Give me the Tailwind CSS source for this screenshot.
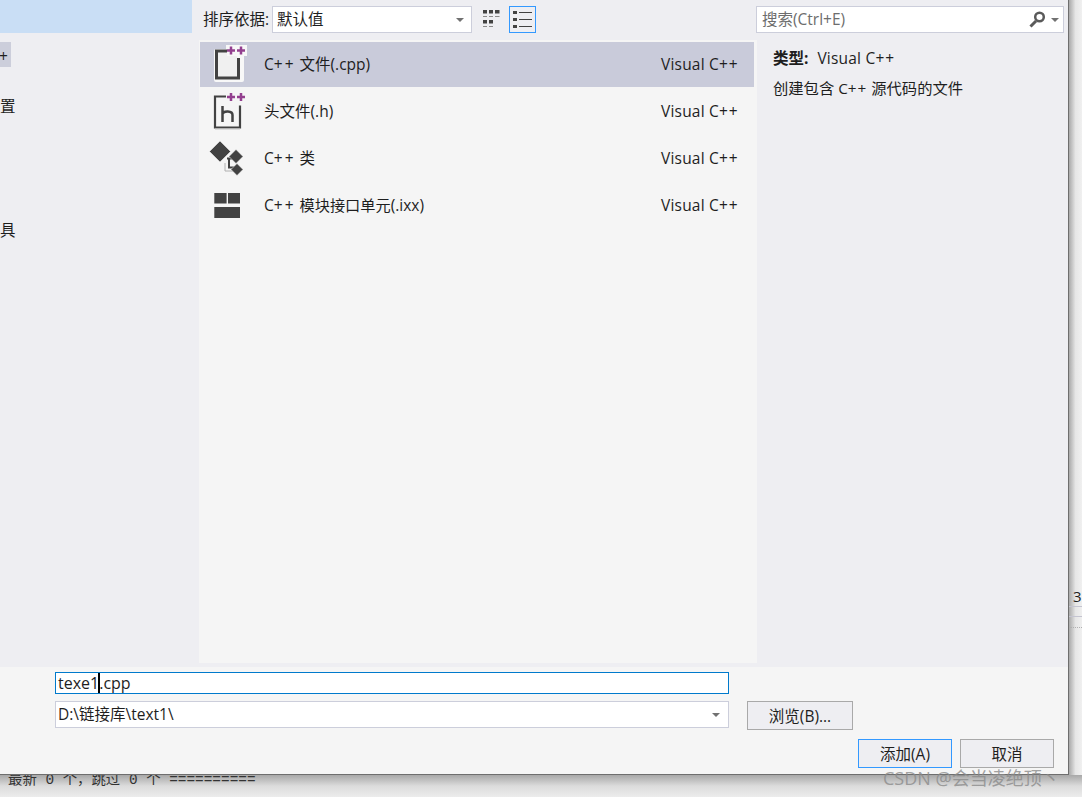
<!DOCTYPE html>
<html lang="zh">
<head>
<meta charset="utf-8">
<title>添加新项</title>
<script src="https://cdn.jsdelivr.net/npm/@tailwindcss/browser@4"></script>
</head>
<body class="w-[1082px] h-[797px] overflow-hidden relative bg-[#e4e4e4] text-[15.5px] text-[#1e1e1e] font-['Open_Sans','Noto_Sans_CJK_SC',sans-serif]">

<!-- 背后的窗口 -->
<div class="absolute left-[1069px] top-0 w-[13px] h-[797px] bg-gradient-to-r from-[#a9a9a9] via-[#e6e6e6] to-[#f0f0f0]">
  <div class="mt-[586px] pl-[4px] h-[21px] leading-[21px] text-[15px] border-b border-[#c4c4d0]">3</div>
  <div class="h-[10px] border-b border-[#c4c4d0]"></div>
  <div class="mt-[10px] ml-[1px] h-[1px] border-t border-dotted border-[#b0b0b0]"></div>
</div>
<div class="absolute left-0 top-[775px] w-[1082px] h-[22px] bg-gradient-to-b from-[#a8a8a8] via-[#dcdcdc] to-[#ececec] overflow-hidden">
  <div class="-mt-[4px] pl-[8px] whitespace-pre leading-[18px] text-[14.4px] text-[#333] font-['Liberation_Mono','Noto_Sans_CJK_SC',monospace]">最新 0 个，跳过 0 个 ==========</div>
</div>

<!-- 对话框 -->
<div class="absolute left-0 top-0 w-[1069px] h-[775px] flex flex-col border-r border-b border-[#6e6e6e] bg-[#f5f5f5]">
  <div class="h-[667px] bg-[#eeeef2] flex">
    <!-- 左侧 -->
    <div class="w-[199px] shrink-0 flex flex-col">
      <div class="w-[192px] h-[33px] bg-[#c9def5]"></div>
      <div class="mt-[9px] w-[11px] h-[25px] bg-[#cccedb] leading-[25px] overflow-hidden"><span class="block -ml-[1px] mt-[2px] whitespace-nowrap">+</span></div>
      <div class="mt-[29px] w-[16px] h-[20px] leading-[20px]">置</div>
      <div class="mt-[104px] w-[16px] h-[20px] leading-[20px]">具</div>
    </div>
    <!-- 中间 -->
    <div class="w-[558px] shrink-0 flex flex-col">
      <div class="h-[40px] flex items-start pt-[6px] pl-[4px]">
        <span class="h-[27px] leading-[27px] w-[69px] whitespace-nowrap">排序依据:</span>
        <div class="w-[200px] h-[27px] bg-white border border-[#cccedb] flex items-center justify-between pl-[4px] pr-[7px]">
          <span class="mt-[1px]">默认值</span>
          <span class="w-0 h-0 border-x-[4px] border-x-transparent border-t-[4px] border-t-[#717171]"></span>
        </div>
        <svg class="ml-[11px] mt-[4px]" width="18" height="18" viewBox="0 0 18 18" fill="#424242">
          <rect x="0" y="0" width="4" height="3.500"/><rect x="6" y="0" width="4" height="3.500"/><rect x="12" y="0" width="4.500" height="3.500"/>
          <rect x="0" y="6" width="4" height="1" fill="#8a8a8a"/><rect x="6" y="6" width="4" height="1" fill="#8a8a8a"/><rect x="12" y="6" width="4.500" height="1" fill="#8a8a8a"/>
          <rect x="0" y="10" width="4" height="3.500"/><rect x="6" y="10" width="4" height="3.500"/>
          <rect x="0" y="16" width="4" height="1" fill="#8a8a8a"/><rect x="6" y="16" width="4" height="1" fill="#8a8a8a"/>
        </svg>
        <div class="ml-[8px] w-[27px] h-[27px] border border-[#3399ff] flex items-center justify-center">
          <svg width="19" height="17" viewBox="0 0 19 17" fill="#424242">
            <rect x="0" y="0" width="4" height="3"/><rect x="6" y="1" width="13" height="1"/>
            <rect x="0" y="7" width="4" height="3"/><rect x="6" y="8" width="13" height="1"/>
            <rect x="0" y="14" width="4" height="3"/><rect x="6" y="15" width="13" height="1"/>
          </svg>
        </div>
      </div>
      <div class="h-[623px] bg-[#f5f5f5] pl-[1px] pr-[3px] pt-[2px] flex flex-col gap-[2px]">
        <div class="h-[45px] bg-[#c9cbda] flex items-center">
          <svg class="w-[36px] h-[40px] ml-[12px] shrink-0" viewBox="0 0 36 40">
            <path d="M2 6a2 2 0 0 1 2-2h10v-4h21v11h-3v24a2 2 0 0 1-2 2h-26a2 2 0 0 1-2-2z" fill="#f8f8f8"/>
            <path d="M5 6h10v5h10v22h-20z" fill="#f0f0f0"/>
            <path d="M15 6h-10.500v27h22v-20" fill="none" stroke="#424242" stroke-width="3"/>
            <path d="M15 5.500h8M19 1.500v8M25 5.500h8M29 1.500v8" stroke="#93408f" stroke-width="2.500"/>
          </svg>
          <span class="ml-[16px] mt-[1px] w-[397px] shrink-0">C<span class="tracking-[2px]">++</span> 文件(.cpp)</span>
          <span class="mt-[1px] tracking-[0.2px]">Visual C<span class="tracking-[1px]">++</span></span>
        </div>
        <div class="h-[45px] flex items-center">
          <svg class="w-[36px] h-[40px] ml-[12px] shrink-0" viewBox="0 0 36 40">
            <path d="M14 4.500h-11v31h25v-22" fill="none" stroke="#424242" stroke-width="2.200"/>
            <path d="M3 37h25" stroke="#c4c4c4" stroke-width="1"/>
            <path d="M10.500 14v16M10.500 22c1-3.500 10-3.500 10 1v7" fill="none" stroke="#424242" stroke-width="2.500"/>
            <path d="M15 5h8M19 1v8M25 5h8M29 1v8" stroke="#93408f" stroke-width="2.500"/>
          </svg>
          <span class="ml-[16px] mt-[1px] w-[397px] shrink-0">头文件(.h)</span>
          <span class="mt-[1px] tracking-[0.2px]">Visual C<span class="tracking-[1px]">++</span></span>
        </div>
        <div class="h-[45px] flex items-center">
          <svg class="w-[36px] h-[40px] ml-[9px] shrink-0" viewBox="0 0 36 40">
            <path d="M16 24v8h10" fill="none" stroke="#b0b0b0" stroke-width="1"/>
            <path d="M18 19.500h8M20 19.500v9h6" fill="none" stroke="#424242" stroke-width="2"/>
            <path d="M11 2l10.500 10.500-10.500 10.500-10.500-10.500z" fill="#424242" stroke="#fafafa" stroke-width="0.500"/>
            <path d="M27 10.500l7 7-7 7-7-7z" fill="#424242" stroke="#fafafa" stroke-width="0.500"/>
            <path d="M28 24.500l6 6-6 6-6-6z" fill="#424242" stroke="#fafafa" stroke-width="0.500"/>
          </svg>
          <span class="ml-[19px] mt-[1px] w-[397px] shrink-0">C<span class="tracking-[2px]">++</span> 类</span>
          <span class="mt-[1px] tracking-[0.2px]">Visual C<span class="tracking-[1px]">++</span></span>
        </div>
        <div class="h-[45px] flex items-center">
          <svg class="w-[36px] h-[40px] ml-[12px] shrink-0" viewBox="0 0 36 40" fill="#424242">
            <rect x="2.300" y="7" width="12.300" height="10.500"/><rect x="16" y="7" width="12" height="10.500"/><rect x="2.300" y="21" width="25.700" height="11"/>
          </svg>
          <span class="ml-[16px] mt-[1px] w-[397px] shrink-0 whitespace-nowrap">C<span class="tracking-[2px]">++</span> <span class="text-[15.2px]">模块接口单元</span>(.ixx)</span>
          <span class="mt-[1px] tracking-[0.2px]">Visual C<span class="tracking-[1px]">++</span></span>
        </div>
      </div>
    </div>
    <!-- 右侧 -->
    <div class="flex-1 flex flex-col">
      <div class="h-[27px] mt-[6px] w-[308px] ml-[-1px] bg-white border border-[#cccedb] flex items-center justify-between pl-[5px] pr-[4px]">
        <span class="mt-[1px] text-[#6d6d6d]">搜索(Ctrl+E)</span>
        <span class="flex items-center gap-[5px]">
          <svg width="17" height="17" viewBox="0 0 17 17" fill="none" stroke="#5a5a5a">
            <circle cx="10.500" cy="6" r="4.300" stroke-width="2.500"/>
            <path d="M7 10l-5.500 5.500" stroke-width="3"/>
          </svg>
          <span class="w-0 h-0 border-x-[4px] border-x-transparent border-t-[4px] border-t-[#717171]"></span>
        </span>
      </div>
      <div class="pl-[16px] mt-[15px] h-[20px] leading-[20px]"><b class="font-bold">类型:</b><span class="ml-[9px] tracking-[0.2px]">Visual C<span class="tracking-[1px]">++</span></span></div>
      <div class="pl-[16px] mt-[10px] h-[20px] leading-[20px] text-[15.3px]">创建包含 C<span class="tracking-[1px]">++</span> 源代码的文件</div>
    </div>
  </div>
  <!-- 底部 -->
  <div class="flex-1 pl-[55px] pt-[5px] flex flex-col">
    <div class="w-[674px] h-[22px] bg-white border border-[#007acc] flex items-center pl-[2px] text-[16px]">
      <span>texe1</span><span class="w-[2px] h-[20px] bg-black -mx-[1px]"></span><span>.cpp</span>
    </div>
    <div class="mt-[7px] flex items-start">
      <div class="w-[674px] h-[27px] bg-white border border-[#cccedb] flex items-center justify-between pl-[2px] pr-[8px] text-[15.5px]">
        <span>D:\链接库\text1\</span>
        <span class="w-0 h-0 border-x-[4px] border-x-transparent border-t-[4px] border-t-[#717171]"></span>
      </div>
      <button class="ml-[18px] w-[106px] h-[29px] pt-[2px] bg-[#eeeef2] border border-[#a9a9a9]">浏览(B)...</button>
    </div>
    <div class="mt-[9px] flex justify-end pr-[14px] gap-[8px]">
      <button class="w-[94px] h-[29px] pt-[2px] bg-[#eeeef2] border border-[#3399ff]">添加(A)</button>
      <button class="w-[94px] h-[29px] pt-[2px] bg-[#eeeef2] border border-[#a9a9a9]">取消</button>
    </div>
  </div>
</div>

<!-- 水印 -->
<div class="absolute left-[883px] top-[766px] text-[18px] leading-[24px] whitespace-nowrap text-[#8a8a8a]/80">CSDN @会当凌绝顶丶</div>
</body>
</html>
